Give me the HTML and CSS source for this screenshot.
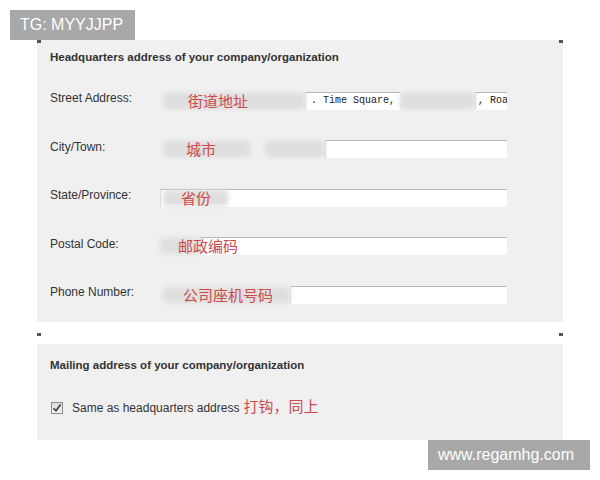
FILE: index.html
```html
<!DOCTYPE html>
<html lang="en">
<head>
  <meta charset="UTF-8">
  <title>Company Address</title>
  <link rel="stylesheet" href="styles.css">
</head>
<body>
  <div class="tag">TG: MYYJJPP</div>

  <div class="panel panel-hq">
    <div class="marks"><span></span><span></span></div>
    <h3>Headquarters address of your company/organization</h3>

    <div class="row">
      <label>Street Address:</label>
      <div class="field">
        <span class="blur b-street"><em>街道地址</em></span>
        <span class="input i-time">. Time Square,</span>
        <span class="blur b-street2"></span>
        <span class="input i-road">, Roa</span>
      </div>
    </div>

    <div class="row">
      <label>City/Town:</label>
      <div class="field">
        <span class="blur b-city"><em>城市</em></span>
        <span class="blur b-city2"></span>
        <span class="input grow"></span>
      </div>
    </div>

    <div class="row">
      <label>State/Province:</label>
      <div class="field">
        <span class="input grow open">
          <span class="blur b-state"><em>省份</em></span>
        </span>
      </div>
    </div>

    <div class="row">
      <label>Postal Code:</label>
      <div class="field">
        <span class="blur b-postal"><em>邮政编码</em></span>
        <span class="input grow"></span>
      </div>
    </div>

    <div class="row">
      <label>Phone Number:</label>
      <div class="field">
        <span class="blur b-phone"><em>公司座机号码</em></span>
        <span class="input grow"></span>
      </div>
    </div>
  </div>

  <div class="sep"><span></span><span></span></div>

  <div class="panel panel-mail">
    <h3>Mailing address of your company/organization</h3>
    <div class="check-row">
      <span class="checkbox">
        <svg width="10" height="10" viewBox="0 0 10 10"><path d="M1.5 5.2 L4 7.8 L8.6 1.6" fill="none" stroke="#3a3a3a" stroke-width="1.6"/></svg>
      </span>
      <span class="check-label">Same as headquarters address</span>
      <em class="note">打钩，同上</em>
    </div>
  </div>

  <div class="site">www.regamhg.com</div>
</body>
</html>
```

FILE: styles.css
```css
body { margin: 0; background: #fff; font-family: "Liberation Sans", Arial, sans-serif; color: #333; }

.tag {
  margin: 10px 0 0 10px;
  width: 125px;
  height: 30px;
  line-height: 30px;
  padding-left: 10px;
  box-sizing: border-box;
  background: #a8a8a8;
  color: #fff;
  font-size: 16px;
}

.panel {
  margin-left: 37px;
  width: 526px;
  background: #f0f0f0;
  box-sizing: border-box;
  padding: 0 13px;
}
.panel h3 { margin: 0; font-size: 11.5px; line-height: 15px; font-weight: bold; color: #333; }
.panel-hq { height: 282px; }
.panel-hq h3 { margin-top: 7px; margin-bottom: 9px; }
.panel-mail { height: 96px; padding-top: 14px; }

.marks, .sep { display: flex; justify-content: space-between; }
.marks { height: 3px; margin: 0 -13px; }
.marks span, .sep span { width: 4px; height: 3px; background: #555; }
.sep { margin-left: 37px; width: 526px; height: 22px; align-items: center; padding-top: 2px; box-sizing: border-box; }

.row { display: flex; align-items: center; height: 48.5px; }
.row label { width: 110px; font-size: 12px; }
.field { display: flex; width: 347px; height: 18px; margin-top: 5px; }

.input {
  display: block;
  height: 18px;
  box-sizing: border-box;
  background: #fff;
  border-top: 1px solid #b8b8b8;
  border-left: 1px solid #dcdcdc;
  font-family: "Liberation Mono", "Courier New", monospace;
  font-size: 10px;
  line-height: 16px;
  color: #222;
  white-space: nowrap;
  overflow: hidden;
}
.input.open { overflow: visible; }
.grow { flex: 1; }

.blur {
  display: block;
  position: relative;
  z-index: 0;
  height: 16px;
  margin-top: 1px;
  white-space: nowrap;
}
.blur::before {
  content: "";
  position: absolute;
  inset: 0;
  z-index: -1;
  background: #dedede;
  border-radius: 4px;
  filter: blur(2.5px);
}
.blur em, .note {
  font-style: normal;
  font-family: "Noto Sans CJK SC", sans-serif;
  font-size: 15px;
  line-height: 16px;
  color: #cf4a4a;
}

.b-street { width: 142px; margin-left: 3px; padding-left: 25px; box-sizing: border-box; }
.i-time { width: 95px; padding-left: 5px; }
.b-street2 { width: 75px; }
.i-road { width: 32px; padding-left: 2px; }

.b-city { width: 87px; margin-left: 3px; padding-left: 23px; box-sizing: border-box; }
.b-city2 { width: 60px; margin-left: 15px; }

.b-state { width: 65px; margin: 0 0 0 2px; padding-left: 18px; box-sizing: border-box; }

.b-postal { width: 40px; padding-left: 18px; box-sizing: border-box; }

.b-phone { width: 127px; margin-left: 3px; padding-left: 20px; box-sizing: border-box; }

.check-row { display: flex; align-items: center; height: 20px; margin-top: 25px; padding-left: 1px; }
.checkbox {
  width: 12px;
  height: 12px;
  box-sizing: border-box;
  border: 1px solid #8e8e8e;
  background: linear-gradient(#dcdcdc, #f4f4f4);
  display: flex;
  align-items: center;
  justify-content: center;
}
.check-label { margin-left: 9px; font-size: 12px; color: #333; }
.note { margin-left: 4px; margin-top: -5px; }

.site {
  margin-left: 428px;
  width: 162px;
  height: 30px;
  line-height: 30px;
  padding-left: 10px;
  box-sizing: border-box;
  background: #a8a8a8;
  color: #fff;
  font-size: 16px;
}
```
